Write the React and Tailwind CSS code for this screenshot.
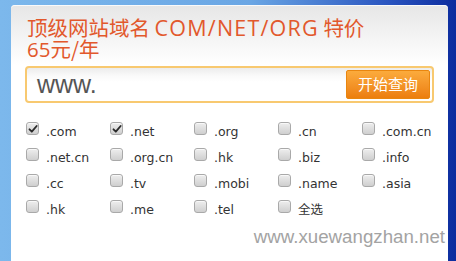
import React from "react";

const rows = [
  [".com", ".net", ".org", ".cn", ".com.cn"],
  [".net.cn", ".org.cn", ".hk", ".biz", ".info"],
  [".cc", ".tv", ".mobi", ".name", ".asia"],
  [".hk", ".me", ".tel", "全选"],
];
const checked = new Set([".com", ".net"]);

function Box({ on }) {
  return (
    <span className="relative flex h-[13px] w-[13px] shrink-0 items-center justify-center rounded-[3px] border border-[#a9a9a9] bg-gradient-to-b from-[#eeeeee] to-[#cfcfcf] shadow-[inset_0_1px_0_#f8f8f8]">
      {on && (
        <svg viewBox="0 0 12 12" className="h-[10px] w-[10px]">
          <path d="M1.8 6.4 L4.6 9.2 L10.4 2.4" fill="none" stroke="#2a2a2a" strokeWidth="2.2" strokeLinecap="round" strokeLinejoin="round" />
        </svg>
      )}
    </span>
  );
}

export default function App() {
  return (
    <div className="h-[261px] w-[456px] overflow-hidden bg-[linear-gradient(90deg,#7cb8ec_0%,#6aa6e4_55%,#2a55c0_85%,#0c2c9e_100%)] pl-[11px] pr-[8px] pt-[5px]">
      <div className="relative h-[256px] rounded-t-[4px] bg-[linear-gradient(180deg,#e6e6e6_0px,#f3f3f3_30px,#ffffff_60px)] pl-[16px] pt-[12px] shadow-[inset_0_1px_0_#fafafa]">
        <div className="text-[20.5px] leading-[21px] text-[#e2582c]" style={{ fontFamily: '"Noto Sans CJK SC", sans-serif' }}>
          顶级网站域名{" "}
          <span className="text-[21.5px] tracking-[1.2px]" style={{ fontFamily: '"Open Sans", "Noto Sans CJK SC", sans-serif' }}>COM/NET/ORG</span>{" "}
          特价
          <br />
          <span style={{ fontFamily: '"Open Sans", "Noto Sans CJK SC", sans-serif' }}>65</span>元/年
        </div>

        <div className="ml-[-2px] mt-[6px] flex h-[37px] w-[409px] items-center rounded-[4px] border-2 border-[#f8c970] bg-[linear-gradient(180deg,#ececec_0px,#fafafa_8px,#ffffff_14px)] pl-[10px] pr-[2px]">
          <div className="flex-1 text-[25px] leading-none text-[#555555]" style={{ fontFamily: '"Liberation Sans", Arial, sans-serif' }}>
            www.
          </div>
          <div className="flex h-[29px] w-[84px] items-center justify-center rounded-[2px] border border-[#e9860f] bg-gradient-to-b from-[#fbab3c] to-[#ec7e0c] text-[15px] text-white" style={{ fontFamily: '"Noto Sans CJK SC", sans-serif' }}>
            开始查询
          </div>
        </div>

        <div className="ml-[-1px] mt-[19px] flex flex-col" style={{ fontFamily: '"DejaVu Sans", Verdana, "Noto Sans CJK SC", sans-serif' }}>
          {rows.map((r, i) => (
            <div key={i} className="flex h-[26px]">
              {r.map((t, j) => (
                <div key={j} className="flex w-[84px] shrink-0 items-start gap-[7px]">
                  <Box on={i === 0 && checked.has(t)} />
                  <span className="mt-[2px] whitespace-nowrap text-[12.5px] leading-[15px] text-[#333333]">{t}</span>
                </div>
              ))}
            </div>
          ))}
        </div>

        <div className="absolute right-[3px] top-[221px] text-[18.7px] leading-[22px] text-[#a3a3a3]" style={{ fontFamily: '"Liberation Sans", Arial, sans-serif' }}>
          www.xuewangzhan.net
        </div>
      </div>
    </div>
  );
}
